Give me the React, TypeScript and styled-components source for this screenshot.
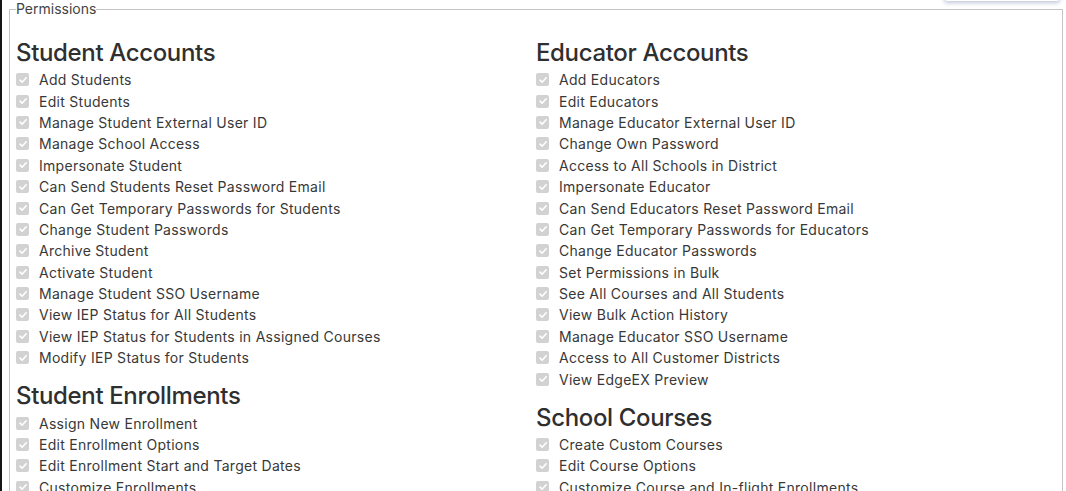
import React from "react";
import styled, { createGlobalStyle } from "styled-components";

const Global = createGlobalStyle`
  html, body { margin: 0; padding: 0; overflow: hidden; background: #fff; }
  body { font-family: Inter, "Noto Sans", "Liberation Sans", sans-serif; color: #333; }
  * { box-sizing: border-box; }
`;

const Page = styled.div`
  position: relative;
  border-left: 2px solid #161616;
  padding: 0 4px 0 7px;
  min-height: 491px;
`;

const Overlay = styled.div`
  position: absolute;
  top: -24px;
  left: 942px;
  width: 116px;
  height: 25px;
  background: #fff;
  border-radius: 4px;
  box-shadow: 0 2px 4px rgba(70, 95, 140, 0.35);
`;

const Fieldset = styled.fieldset`
  margin: 0;
  border: 1px solid #c4c4c4;
  padding: 0 6px 20px 6px;
`;

const Legend = styled.legend`
  padding: 0;
  margin-left: 0;
  font-size: 14px;
  line-height: 18px;
  color: #444;
`;

const Columns = styled.div`
  display: grid;
  grid-template-columns: 520px 520px;
  padding-top: 20px;
`;

const Column = styled.div`
  display: flex;
  flex-direction: column;
`;

const Section = styled.section`
  & + & { margin-top: 13px; }
`;

const Heading = styled.h3`
  margin: 0 0 2px 0;
  font-size: 24px;
  line-height: 29px;
  font-weight: 500;
  color: #2f2f2f;
  letter-spacing: -0.35px;
`;

const List = styled.ul`
  list-style: none;
  margin: 0;
  padding: 0;
`;

const Item = styled.li`
  display: flex;
  align-items: center;
  height: 21.4px;
  font-size: 14px;
  color: #383838;
  letter-spacing: 0.28px;
`;

const Box = styled.span`
  width: 13px;
  height: 13px;
  border-radius: 2px;
  background: #d2d2d2;
  margin-right: 10px;
  display: inline-flex;
  align-items: center;
  justify-content: center;
  flex: none;
`;

const Check = () => (
  <svg width="10" height="10" viewBox="0 0 10 10" aria-hidden>
    <path d="M2 5.2 L4.1 7.2 L8.2 2.8" fill="none" stroke="#fff" strokeWidth="1.6" strokeLinecap="round" strokeLinejoin="round" />
  </svg>
);

type SectionData = { title: string; items: string[] };

const left: SectionData[] = [
  {
    title: "Student Accounts",
    items: [
      "Add Students",
      "Edit Students",
      "Manage Student External User ID",
      "Manage School Access",
      "Impersonate Student",
      "Can Send Students Reset Password Email",
      "Can Get Temporary Passwords for Students",
      "Change Student Passwords",
      "Archive Student",
      "Activate Student",
      "Manage Student SSO Username",
      "View IEP Status for All Students",
      "View IEP Status for Students in Assigned Courses",
      "Modify IEP Status for Students",
    ],
  },
  {
    title: "Student Enrollments",
    items: [
      "Assign New Enrollment",
      "Edit Enrollment Options",
      "Edit Enrollment Start and Target Dates",
      "Customize Enrollments",
      "Archive Enrollments",
      "Activate Enrollments",
    ],
  },
];

const right: SectionData[] = [
  {
    title: "Educator Accounts",
    items: [
      "Add Educators",
      "Edit Educators",
      "Manage Educator External User ID",
      "Change Own Password",
      "Access to All Schools in District",
      "Impersonate Educator",
      "Can Send Educators Reset Password Email",
      "Can Get Temporary Passwords for Educators",
      "Change Educator Passwords",
      "Set Permissions in Bulk",
      "See All Courses and All Students",
      "View Bulk Action History",
      "Manage Educator SSO Username",
      "Access to All Customer Districts",
      "View EdgeEX Preview",
    ],
  },
  {
    title: "School Courses",
    items: [
      "Create Custom Courses",
      "Edit Course Options",
      "Customize Course and In-flight Enrollments",
      "Archive Courses",
    ],
  },
];

const renderColumn = (sections: SectionData[]) => (
  <Column>
    {sections.map((s) => (
      <Section key={s.title}>
        <Heading>{s.title}</Heading>
        <List>
          {s.items.map((it) => (
            <Item key={it}>
              <Box>
                <Check />
              </Box>
              {it}
            </Item>
          ))}
        </List>
      </Section>
    ))}
  </Column>
);

export default function App() {
  return (
    <>
      <Global />
      <Page>
        <Fieldset>
          <Legend>Permissions</Legend>
          <Columns>
            {renderColumn(left)}
            {renderColumn(right)}
          </Columns>
        </Fieldset>
        <Overlay />
      </Page>
    </>
  );
}
